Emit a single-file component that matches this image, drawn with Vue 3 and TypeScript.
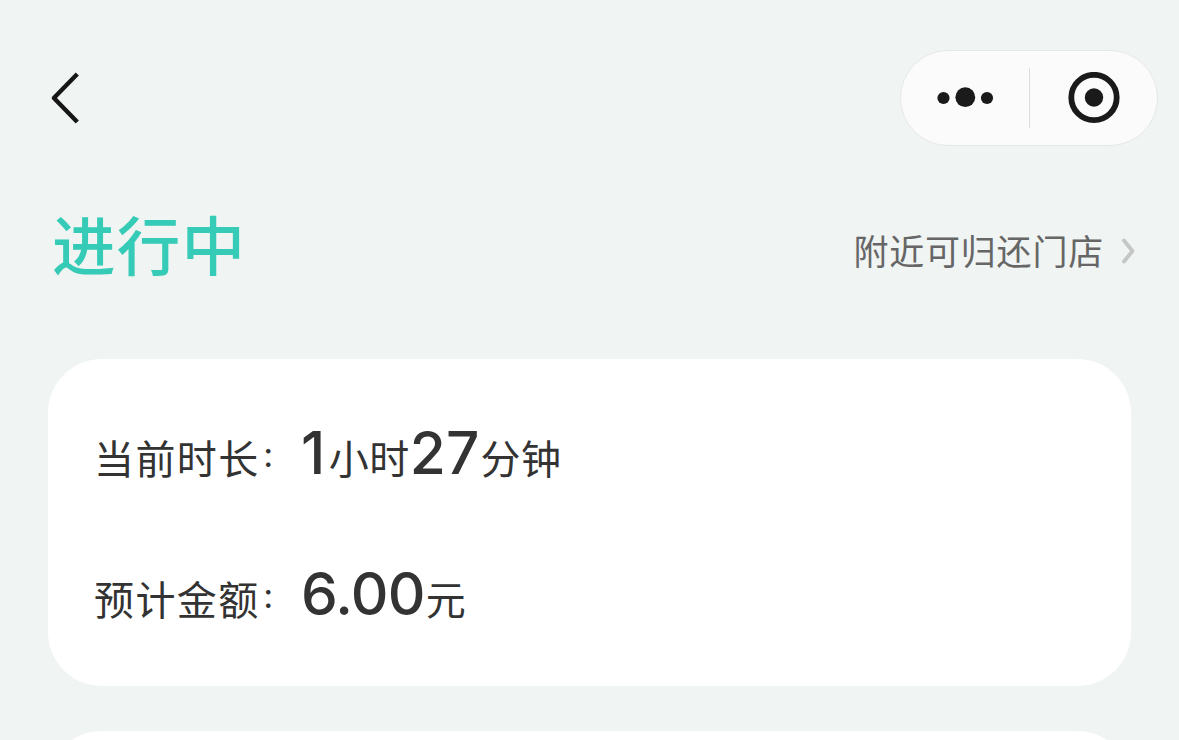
<script setup lang="ts">
import { ref } from 'vue';

interface Part {
  text: string;
  strong?: boolean;
  tracking?: number;
}

interface Row {
  label: string;
  parts: Part[];
}

const status = ref('进行中');

const rows = ref<Row[]>([
  {
    label: '当前时长',
    parts: [
      { text: '1', strong: true, tracking: 2.4 },
      { text: '小时' },
      { text: '27', strong: true, tracking: 0.2 },
      { text: '分钟' },
    ],
  },
  {
    label: '预计金额',
    parts: [{ text: '6.00', strong: true, tracking: -0.7 }, { text: '元' }],
  },
]);
</script>

<template>
  <div class="page">
    <header class="navbar">
      <svg class="back" width="32" height="56" viewBox="0 0 32 56">
        <path d="M29.3 4 L5.9 28 L29.3 52" fill="none" stroke="#161616" stroke-width="4.4" stroke-linejoin="round" />
      </svg>
      <div class="capsule">
        <div class="capsule-btn">
          <svg width="60" height="24" viewBox="0 0 60 24">
            <circle cx="8.5" cy="12" r="6.1" fill="#1a1a1a" />
            <circle cx="30.3" cy="11.2" r="9.9" fill="#1a1a1a" />
            <circle cx="52" cy="12" r="6.1" fill="#1a1a1a" />
          </svg>
        </div>
        <div class="divider"></div>
        <div class="capsule-btn">
          <svg width="54" height="52" viewBox="0 0 54 52">
            <circle cx="28" cy="25.5" r="22.7" fill="none" stroke="#1a1a1a" stroke-width="5.8" />
            <circle cx="28" cy="25.5" r="9.2" fill="#1a1a1a" />
          </svg>
        </div>
      </div>
    </header>

    <section class="status">
      <h1 class="title">{{ status }}</h1>
      <a class="nearby">
        <span>附近可归还门店</span>
        <svg class="arrow" width="16" height="28" viewBox="0 0 16 28">
          <path d="M3 3.5 L11.5 14 L3 24.5" fill="none" stroke="#c5c7c6" stroke-width="3.8" stroke-linecap="round" stroke-linejoin="round" />
        </svg>
      </a>
    </section>

    <section class="card">
      <div v-for="row in rows" :key="row.label" class="row">
        <span class="label">{{ row.label }}<span class="colon">：</span></span>
        <span
          v-for="(part, i) in row.parts"
          :key="i"
          :class="part.strong ? 'number' : 'unit'"
          :style="part.strong ? { letterSpacing: `${part.tracking}px` } : undefined"
        >{{ part.text }}</span>
      </div>
    </section>

    <section class="card next"></section>
  </div>
</template>

<style>
body {
  margin: 0;
  background: #f0f4f3;
}
</style>

<style scoped>
.page {
  height: 740px;
  overflow: hidden;
  box-sizing: border-box;
  padding: 50px 48px 0;
  background: #f0f4f3;
  font-family: "Noto Sans CJK SC", sans-serif;
  color: #333;
}

.navbar {
  display: flex;
  align-items: center;
  justify-content: space-between;
  height: 96px;
  margin-right: -27px;
}

.capsule {
  display: flex;
  align-items: center;
  box-sizing: border-box;
  width: 258px;
  height: 96px;
  border: 1px solid #e5e8e7;
  border-radius: 48px;
  background: #fbfbfb;
}

.capsule-btn {
  flex: 1;
  display: flex;
  align-items: center;
  justify-content: center;
}

.divider {
  width: 1px;
  height: 60px;
  background: #dcdcdc;
}

.status {
  display: flex;
  align-items: flex-start;
  justify-content: space-between;
  height: 100px;
  margin: 48px -6px 0 0;
  padding-left: 4px;
}

.title {
  margin: 0;
  font-size: 63.5px;
  font-weight: 500;
  line-height: 96px;
  letter-spacing: 1.2px;
  color: #36cbb6;
}

.nearby {
  display: flex;
  align-items: center;
  font-size: 35px;
  line-height: 52px;
  letter-spacing: 0.8px;
  color: #666;
  padding-top: 31px;
}

.nearby span {
  margin-top: -1px;
}

.arrow {
  margin: 0 0 0 17px;
}

.card {
  box-sizing: border-box;
  height: 327px;
  margin-top: 65px;
  padding: 23px 46px;
  border-radius: 54px;
  background: #fff;
}

.row {
  display: flex;
  align-items: baseline;
  height: 141px;
  line-height: 141px;
}

.label,
.unit {
  font-size: 40px;
  letter-spacing: 1.4px;
}

.unit {
  margin-left: 1px;
  letter-spacing: 0.5px;
}

.colon {
  display: inline-block;
  width: 39.4px;
  margin-left: 2px;
  font-size: 27px;
  font-weight: 500;
  line-height: 1;
  vertical-align: 7px;
}

.number {
  font-family: Inter, sans-serif;
  font-size: 58.5px;
  font-weight: 550;
}

.next {
  margin-top: 45px;
}
</style>
